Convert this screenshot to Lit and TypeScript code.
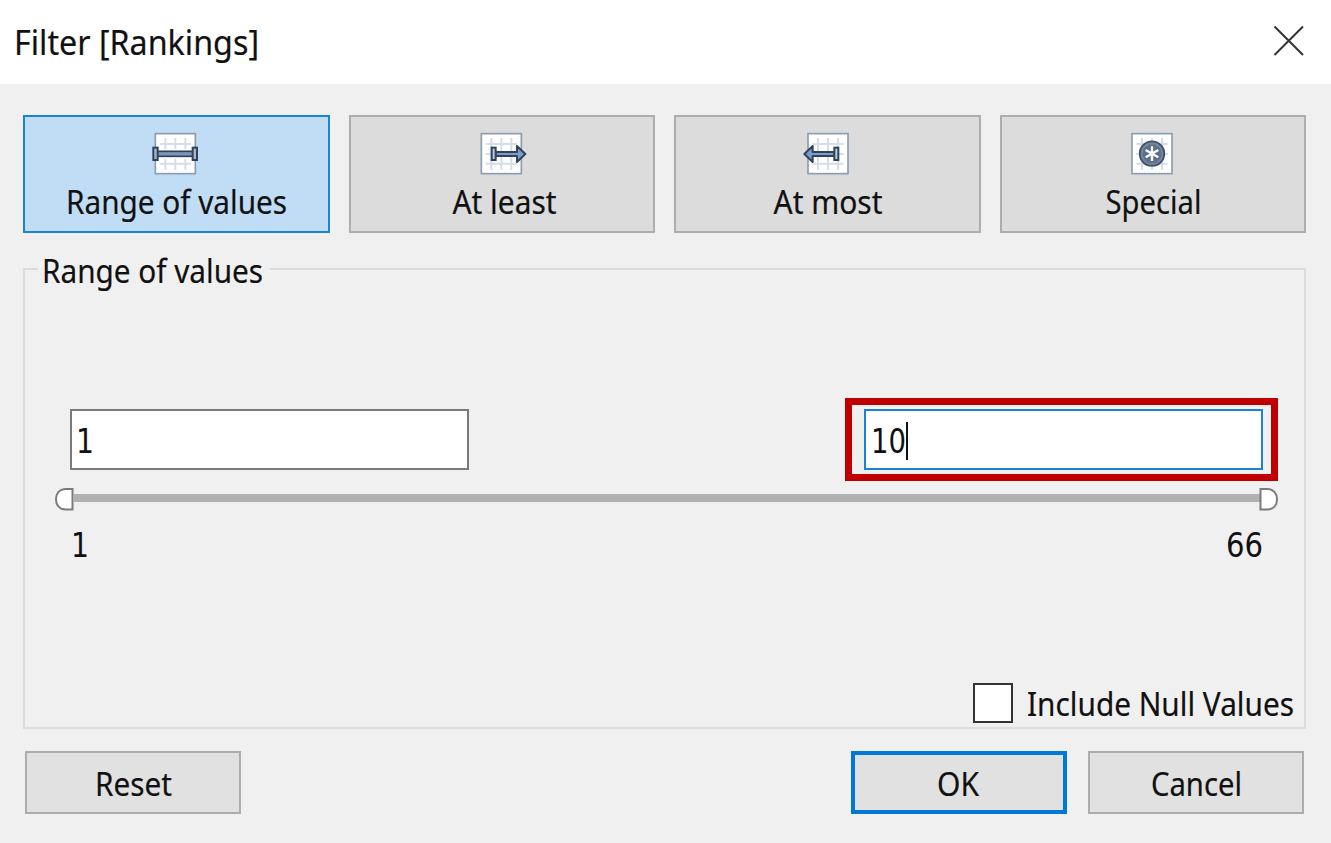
import { LitElement, html, svg, css } from "lit";
import { customElement, property, state } from "lit/decorators.js";

/** A single line of text set to a fixed measure, so labels keep the same condensed width. */
@customElement("fit-label")
class FitLabel extends LitElement {
  @property() text = "";
  @property({ type: Number }) measure = 100;
  @property({ type: Number }) size = 32.8;
  @property({ type: Number }) lead = 0;
  @property({ type: Boolean }) numeric = false;

  static styles = css`
    :host { display: block; flex: none; height: 40px; }
    svg { display: block; overflow: visible; }
    text { font-family: "Noto Sans", "Open Sans", sans-serif; fill: #111; stroke: #111; stroke-width: 0.2px; }
    text.numeric { font-family: "DejaVu Sans Condensed", "DejaVu Sans", sans-serif; stroke: none; }
  `;

  render() {
    return html`<svg width=${this.measure} height="40">
      <text class=${this.numeric ? "numeric" : ""} x=${this.lead} y="31" font-size=${this.size}
        textLength=${this.measure} lengthAdjust="spacingAndGlyphs">${this.text}</text>
    </svg>`;
  }
}

const sheet = (x: number) => svg`
  <rect x=${x} y="41" width="120" height="120" fill="#fff" stroke="#8d9db1" stroke-width="5"/>
  <path d="M${x + 13} 72h94M${x + 13} 102h94M${x + 13} 131h94M${x + 30} 54v96M${x + 60} 54v96M${x + 90} 54v96"
    stroke="#d5ddea" stroke-width="6" fill="none"/>`;

const icons: Record<string, unknown> = {
  range: svg`${sheet(47)}
    <path d="M50 102h116" stroke="#fff" stroke-width="30"/>
    <rect x="52" y="94" width="108" height="15" fill="#7d96ba" stroke="#2f4359" stroke-width="5"/>
    <rect x="41" y="83" width="13" height="37" fill="#a9b9cd" stroke="#2f4359" stroke-width="6"/>
    <rect x="159" y="83" width="13" height="37" fill="#a9b9cd" stroke="#2f4359" stroke-width="6"/>`,
  least: svg`${sheet(47)}
    <path d="M90 96H154V78L179 102L154 126V108H90Z" fill="#7d9ccb" stroke="#2f4359" stroke-width="6" stroke-linejoin="round"/>
    <rect x="78" y="83" width="12" height="37" fill="#b9cae2" stroke="#2f4359" stroke-width="6"/>`,
  most: svg`<g transform="translate(-2 0)">${sheet(54)}
    <path d="M133 96H68V78L43 102L68 126V108H133Z" fill="#7d9ccb" stroke="#2f4359" stroke-width="6" stroke-linejoin="round"/>
    <rect x="133" y="83" width="12" height="37" fill="#b9cae2" stroke="#2f4359" stroke-width="6"/></g>`,
  special: svg`<g transform="translate(-4 0)">${sheet(50)}
    <circle cx="110" cy="101" r="37" fill="#5b6f87" stroke="#3c5066" stroke-width="5"/>
    <circle cx="110" cy="101" r="31" fill="none" stroke="#75889f" stroke-width="5"/>
    <path d="M110 79v44M91 90l38 22M129 90l-38 22" stroke="#fff" stroke-width="7"/></g>`,
};

const tabs = [
  { id: "range", text: "Range of values", w: 221, lead: 0 },
  { id: "least", text: "At least", w: 104, lead: 2.5 },
  { id: "most", text: "At most", w: 109, lead: 0.5 },
  { id: "special", text: "Special", w: 96, lead: 0.5 },
];

@customElement("app-root")
class AppRoot extends LitElement {
  @state() private selected = "range";

  static styles = css`
    :host {
      display: flex; flex-direction: column; width: 1331px; height: 843px;
      box-sizing: border-box; background: #f0f0f0; overflow: hidden;
    }
    * { box-sizing: border-box; }
    header {
      height: 84px; flex: none; background: #fff; display: flex;
      justify-content: space-between; align-items: flex-start; padding: 24px 25px 0 14px;
    }
    .close { display: block; width: 34px; height: 34px; }
    .tabs {
      display: grid; grid-template-columns: repeat(4, 1fr); column-gap: 19px;
      height: 149px; flex: none; padding: 31px 25px 0 23px;
    }
    .tab {
      display: flex; flex-direction: column; align-items: center;
      background: #dcdcdc; border: 2px solid #adadad; padding-top: 3px;
    }
    .tab.on { background: #c0ddf5; border-color: #1883d7; }
    .icon { display: block; flex: none; width: 70px; height: 65px; margin-bottom: -2px; }
    .group {
      display: flex; flex-direction: column; height: 461px; flex: none;
      margin: 35px 25px 0 23px; border: 2px solid #dcdcdc;
    }
    .legend { align-self: flex-start; margin: -18px 0 0 13px; padding: 0 7px 0 4px; background: #f0f0f0; height: 40px; }
    .fields { display: flex; justify-content: space-between; align-items: center; margin: 106px 26px 0 45px; }
    .field { width: 399px; height: 61px; border: 2px solid #7a7a7a; background: #fff; display: flex; padding: 11px 0 0 5px; }
    .ring { width: 433px; height: 83px; border: 7px solid #c00000; display: flex; justify-content: flex-end; align-items: center; padding-right: 8px; }
    .ring .field { border-color: #1883d7; }
    .caret { width: 2px; height: 38px; background: #111; }
    .slider { display: flex; align-items: center; height: 24px; margin: 6px 25px 0 29px; }
    .knob { display: block; width: 20px; height: 24px; flex: none; }
    .track { flex: 1; height: 8px; margin: -2px -1px 0; background: #b1b1b1; }
    .bounds { display: flex; justify-content: space-between; margin: 15px 41px 0 46px; }
    .nulls { display: flex; justify-content: flex-end; margin-top: auto; padding: 0 10px 2px 0; }
    .box { width: 40px; height: 40px; background: #fff; border: 2px solid #333; margin: 0 14px 0 0; }
    .nulls fit-label { margin-top: 2px; }
    footer { display: flex; margin: 22px 27px 0 25px; }
    .btn {
      width: 216px; height: 63px; border: 2px solid #adadad; background: #e1e1e1;
      display: flex; justify-content: center; padding-top: 12px;
    }
    .btn.ok { border: 4px solid #0078d7; padding-top: 10px; margin: 0 21px 0 auto; }
  `;

  render() {
    return html`
      <header>
        <fit-label text="Filter [Rankings]" measure="245" size="34.5"></fit-label>
        <svg class="close" viewBox="0 0 34 34"><path d="M2.500 2.500L31 31M31 2.500L2.500 31" stroke="#333" stroke-width="2" fill="none"/></svg>
      </header>
      <div class="tabs">
        ${tabs.map((t) => html`
          <div class="tab ${t.id === this.selected ? "on" : ""}" @click=${() => (this.selected = t.id)}>
            <svg class="icon" viewBox="4 0 210 195">${icons[t.id]}</svg>
            <fit-label text=${t.text} measure=${t.w} lead=${t.lead}></fit-label>
          </div>`)}
      </div>
      <section class="group">
        <div class="legend"><fit-label text="Range of values" measure="221"></fit-label></div>
        <div class="fields">
          <div class="field"><fit-label numeric text="1" measure="18" lead="-1"></fit-label></div>
          <div class="ring"><div class="field"><fit-label numeric text="10" measure="35"></fit-label><span class="caret"></span></div></div>
        </div>
        <div class="slider">
          <svg class="knob" viewBox="0 0 20 24"><path d="M18.500 2H12C5 2 2 7 2 12.300S5 22.500 12 22.500H18.500Z" fill="#fff" stroke="#7a7a7a" stroke-width="2"/></svg>
          <div class="track"></div>
          <svg class="knob" viewBox="0 0 20 24"><path d="M1.500 2H8C15 2 18 7 18 12.300S15 22.500 8 22.500H1.500Z" fill="#fff" stroke="#7a7a7a" stroke-width="2"/></svg>
        </div>
        <div class="bounds">
          <fit-label numeric text="1" measure="18"></fit-label>
          <fit-label numeric text="66" measure="37"></fit-label>
        </div>
        <div class="nulls">
          <span class="box"></span>
          <fit-label text="Include Null Values" measure="267"></fit-label>
        </div>
      </section>
      <footer>
        <div class="btn"><fit-label text="Reset" measure="77"></fit-label></div>
        <div class="btn ok"><fit-label text="OK" measure="42" lead="-1"></fit-label></div>
        <div class="btn"><fit-label text="Cancel" measure="91"></fit-label></div>
      </footer>`;
  }
}
